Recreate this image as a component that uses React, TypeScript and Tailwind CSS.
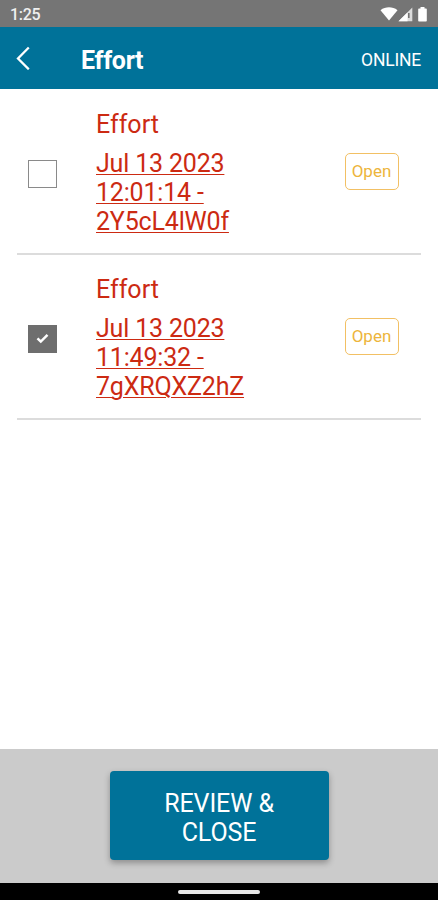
import clsx from "clsx";

const items = [
    { id: 1, title: "Effort", lines: ["Jul 13 2023", "12:01:14 -", "2Y5cL4lW0f"], status: "Open", checked: false },
    { id: 2, title: "Effort", lines: ["Jul 13 2023", "11:49:32 -", "7gXRQXZ2hZ"], status: "Open", checked: true },
];

const StatusBar = () => (
    <div className="flex h-[27px] shrink-0 items-center justify-between bg-[#757575] pl-[10px] pr-[7px] pt-px">
        <span className="pt-[2px] text-[16px] font-medium leading-none tracking-[-0.3px] text-[#f0f0f0]">1:25</span>
        <svg width="51" height="17" viewBox="0 0 51 17" fill="#fff">
            <path d="M0.5 4.2C5.5 0.4 12.5 0.4 17.5 4.2L9 14.5Z" />
            <path d="M32.3 1.5V15.2H18.5Z" fillOpacity="0.75" />
            <path d="M27.5 6.4V15.2H18.5Z" />
            <path d="M28 7h1.6v5h-1.6z" fill="#757575" />
            <path d="M39 2.5h1.5V1h4v1.5H46q.8 0 .8.8V14.7q0 .8-.8.8h-7q-.8 0-.8-.8V3.3q0-.8.8-.8Z" />
        </svg>
    </div>
);

const Header = () => (
    <header className="flex h-[62px] shrink-0 items-center bg-[#007299] pl-4 pr-[17px] text-white">
        <button className="w-[65px]">
            <svg width="14" height="24" viewBox="0 0 14 24" fill="none" stroke="currentColor" strokeWidth="2.3">
                <path d="M12.8 1.5L2 12.5l10.8 10.8" />
            </svg>
        </button>
        <h1 className="flex-1 pt-[5px] text-[25px] font-bold leading-[30px] tracking-[-0.3px]">Effort</h1>
        <span className="pt-[3px] text-[17.5px] leading-5 tracking-[-0.2px]">ONLINE</span>
    </header>
);

const App = () => {
    return (
        <div className="flex h-[900px] w-[438px] flex-col overflow-hidden bg-white font-['Roboto',sans-serif]">
            <StatusBar />
            <Header />

            <main className="flex-1 px-[17px] pt-px">
                {items.map((item) => (
                    <div
                        key={item.id}
                        className="flex h-[165px] items-center border-b-2 border-[#dcdcdc] pl-[11px] pr-[22px]"
                    >
                        <div
                            className={clsx(
                                "mt-[4px] flex h-7 w-[29px] items-center justify-center border",
                                item.checked ? "border-[#6e6e6e] bg-[#6e6e6e]" : "border-[#8a8a8a] bg-white"
                            )}
                        >
                            {item.checked && (
                                <svg width="13" height="11" viewBox="0 0 13 11" fill="none" stroke="#fff" strokeWidth="2.5">
                                    <path d="M1.5 5.3L4.8 8.6L11.5 1.9" />
                                </svg>
                            )}
                        </div>
                        <div className="ml-[39px] flex-1 pt-[2px] text-[25px] leading-[29px] text-[#cc2a12]">
                            <p className="mb-[10px]">{item.title}</p>
                            <p className="tracking-[-0.18px] underline decoration-1 underline-offset-[2px]">
                                {item.lines.map((line) => (
                                    <span key={line} className="block">
                                        {line}
                                    </span>
                                ))}
                            </p>
                        </div>
                        <span className="flex h-[37px] w-[54px] items-center justify-center rounded-[5px] border border-[#f2c064] pr-px text-[17px] text-[#edb53c]">
                            {item.status}
                        </span>
                    </div>
                ))}
            </main>

            <footer className="flex h-[134px] shrink-0 justify-center bg-[#cbcbcb] pt-[22px]">
                <button className="h-[89px] w-[219px] rounded-[4px] bg-[#007299] px-10 pt-[4px] text-[25px] leading-[29px] tracking-[-0.1px] text-white shadow-[0_3px_6px_rgba(0,0,0,0.3)]">
                    REVIEW &amp; CLOSE
                </button>
            </footer>
            <div className="flex h-[17px] shrink-0 items-center justify-center bg-black pt-px">
                <div className="h-1 w-[82px] rounded-full bg-[#e8e8e8]" />
            </div>
        </div>
    );
};

export default App;
